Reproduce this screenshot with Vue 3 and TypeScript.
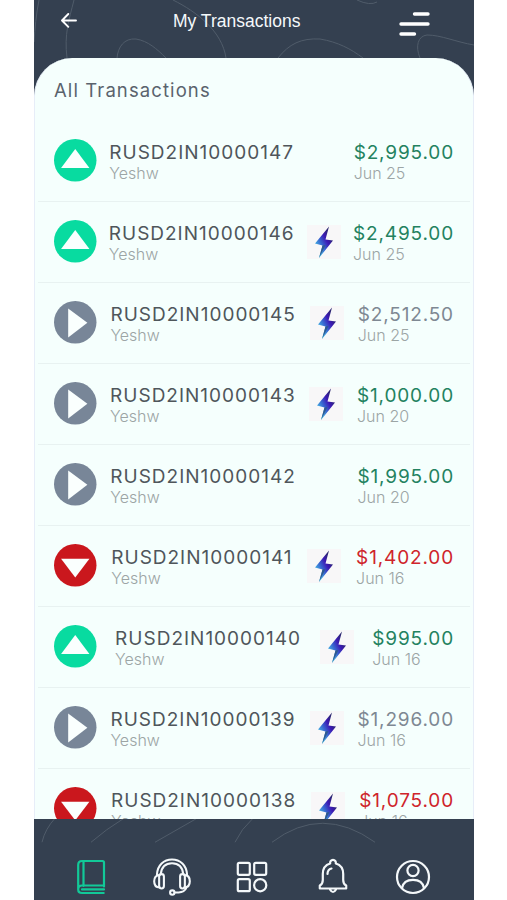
<script setup lang="ts">
type Kind = 'up' | 'down' | 'play'
type Tone = 'green' | 'red' | 'grey'

interface Transaction {
  id: string
  name: string
  kind: Kind
  tone: Tone
  amount: string
  date: string
  instant: boolean
}

const transactions: Transaction[] = [
  { id: 'RUSD2IN10000147', name: 'Yeshw', kind: 'up', tone: 'green', amount: '$2,995.00', date: 'Jun 25', instant: false },
  { id: 'RUSD2IN10000146', name: 'Yeshw', kind: 'up', tone: 'green', amount: '$2,495.00', date: 'Jun 25', instant: true },
  { id: 'RUSD2IN10000145', name: 'Yeshw', kind: 'play', tone: 'grey', amount: '$2,512.50', date: 'Jun 25', instant: true },
  { id: 'RUSD2IN10000143', name: 'Yeshw', kind: 'play', tone: 'green', amount: '$1,000.00', date: 'Jun 20', instant: true },
  { id: 'RUSD2IN10000142', name: 'Yeshw', kind: 'play', tone: 'green', amount: '$1,995.00', date: 'Jun 20', instant: false },
  { id: 'RUSD2IN10000141', name: 'Yeshw', kind: 'down', tone: 'red', amount: '$1,402.00', date: 'Jun 16', instant: true },
  { id: 'RUSD2IN10000140', name: 'Yeshw', kind: 'up', tone: 'green', amount: '$995.00', date: 'Jun 16', instant: true },
  { id: 'RUSD2IN10000139', name: 'Yeshw', kind: 'play', tone: 'grey', amount: '$1,296.00', date: 'Jun 16', instant: true },
  { id: 'RUSD2IN10000138', name: 'Yeshw', kind: 'down', tone: 'red', amount: '$1,075.00', date: 'Jun 16', instant: true },
]

const shapes: Record<Kind, string> = {
  up: 'M21 9.8 35 28.6H7Z',
  down: 'M21 33 7 14.5H35Z',
  play: 'M14 7.5 33 21.5 14 36Z',
}
</script>

<template>
  <div class="phone">
    <header class="header">
      <svg class="lines" viewBox="0 0 440 98" fill="none">
        <path d="M5 0C2 15 1 28 0 42M40 0C35 20 30 34 33 58M139 0C163 12 188 31 192 58M83 58C84 47 90 38 102 39C114 41 123 49 132 58M244 58C255 44 267 38 286 39C304 42 317 49 329 58M323 0Q336 6 343 2M386 58C381 46 384 36 393 35C407 35 422 42 440 45" />
      </svg>
      <button class="back" aria-label="Back">
        <svg width="16" height="15" viewBox="0 0 16 15" fill="none">
          <path d="M15 7.5H1.3M7.3 1 1 7.5l6.3 6.3" stroke="#fff" stroke-width="1.9" stroke-linecap="round" stroke-linejoin="round" />
        </svg>
      </button>
      <h1>My Transactions</h1>
      <button class="menu" aria-label="Menu">
        <svg width="31" height="24" viewBox="0 0 31 24" fill="none">
          <path d="M15.5 2H29M2 12H29M2 22H15.5" stroke="#fff" stroke-width="3.4" stroke-linecap="round" />
        </svg>
      </button>
    </header>

    <main class="sheet">
      <h2>All Transactions</h2>
      <ul>
        <li v-for="t in transactions" :key="t.id">
          <svg class="badge" :class="t.kind" viewBox="0 0 42 42">
            <circle cx="21" cy="21" r="21" />
            <path :d="shapes[t.kind]" fill="#fafffe" />
          </svg>
          <div class="text">
            <span class="main">{{ t.id }}</span>
            <span class="sub">{{ t.name }}</span>
          </div>
          <div class="instant" :class="{ shown: t.instant }">
            <svg v-if="t.instant" width="34" height="34" viewBox="0 0 34 34">
              <defs>
                <linearGradient :id="'bolt-' + t.id" x1="8" y1="22" x2="25" y2="13" gradientUnits="userSpaceOnUse">
                  <stop offset="0" stop-color="#48c4e8" />
                  <stop offset=".4" stop-color="#3862cf" />
                  <stop offset=".7" stop-color="#3c18b4" />
                  <stop offset="1" stop-color="#2b2670" />
                </linearGradient>
              </defs>
              <path d="M22 1.5 8 18.5 15.500 20.500 12 33 26 15.500 18.500 14.500Z" :fill="`url(#bolt-${t.id})`" />
              <path d="M15.500 20.500 18.500 20 12 33Z" fill="#2f5a8f" />
            </svg>
          </div>
          <div class="text">
            <span class="main amount" :class="t.tone">{{ t.amount }}</span>
            <span class="sub">{{ t.date }}</span>
          </div>
        </li>
      </ul>
    </main>

    <nav class="tabs">
      <svg class="lines" viewBox="0 0 440 81" fill="none">
        <path d="M21 0Q11 11 8 24M90 0Q72 11 57 24M163 0L121 24M219 0Q207 11 201 24M238 24Q288-14 341 24" transform="translate(0 -1)" />
      </svg>
      <a class="active" aria-label="Transactions">
        <svg width="40" height="40" viewBox="0 0 40 40">
          <path d="M33 29.500V5.500Q33 4 31.500 4H11Q7.200 4 7.200 8V32.500Q7.200 36 11 36H32.700M12.500 4V29M33 28.500H11Q7.200 28.500 7.200 32.500M11 32.400H33" />
        </svg>
      </a>
      <a aria-label="Support">
        <svg width="40" height="40" viewBox="-1 -1 42 41">
          <path d="M4.200 17C4.700 7 11.500 1.200 20 1.200S35.300 7 35.800 17M8.200 16.500C9 8.500 13.500 5 20 5s11 3.500 11.800 11.500" />
          <path d="M7 17.500C3 17.500 1.300 20.500 1.300 24S3 30.500 7 30.500M33 17.500C37 17.500 38.700 20.500 38.700 24S37 30.500 33 30.500" />
          <rect x="6.500" y="16.500" width="5" height="15" rx="2.500" />
          <rect x="28.500" y="16.500" width="5" height="15" rx="2.500" />
          <path d="M35 31Q33 35.700 27 35.700H22.800" />
          <circle cx="20.300" cy="35.800" r="2.300" />
        </svg>
      </a>
      <a aria-label="Services">
        <svg width="40" height="40" viewBox="0 0 40 40">
          <rect x="5.800" y="5.800" width="12" height="12" rx="1.500" />
          <rect x="22.200" y="5.800" width="12" height="12" rx="1.500" />
          <rect x="5.800" y="22.200" width="12" height="12" rx="1.500" />
          <circle cx="28.200" cy="28.200" r="6.100" />
        </svg>
      </a>
      <a aria-label="Notifications">
        <svg width="40" height="40" viewBox="0 0 40 40">
          <path d="M17.200 6.500A2.900 2.900 0 1 1 22.800 6.500C28 8 30.200 12 30.200 17V23Q30.200 27 33.200 28.500V31.500H6.800V28.500Q9.800 27 9.800 23V17C9.800 12 12 8 17.200 6.500ZM17 32.500Q20 37.500 23 32.500M14.500 17Q14.500 12.500 18.500 11.500" />
        </svg>
      </a>
      <a aria-label="Profile">
        <svg width="40" height="40" viewBox="0 0 40 40">
          <circle cx="20" cy="20" r="16" />
          <circle cx="20" cy="13.500" r="5.600" />
          <path d="M9 31Q10.500 22.800 20 22.800T31 31" />
        </svg>
      </a>
    </nav>
  </div>
</template>

<style>
body {
  background: #fff;
}
</style>

<style scoped>
.phone {
  width: 440px;
  height: 900px;
  margin-left: 34px;
  display: flex;
  flex-direction: column;
  overflow: hidden;
  background: #f5fffd;
  font-family: Inter, sans-serif;
}

.header {
  position: relative;
  box-sizing: border-box;
  flex: none;
  height: 98px;
  margin-bottom: -40px;
  padding: 0 44px 0 27px;
  display: flex;
  align-items: flex-start;
  background: #344050;
}

.lines {
  position: absolute;
  inset: 0;
  width: 100%;
  height: 100%;
  stroke: #505c6a;
  stroke-width: 1;
}

button {
  position: relative;
  padding: 0;
  border: 0;
  background: none;
  display: flex;
}

.back {
  margin-top: 13px;
}

.menu {
  margin: 12px 0 0 auto;
}

h1 {
  position: relative;
  margin: 10px 0 0 96px;
  font: 400 17.5px/22px 'Liberation Sans', sans-serif;
  color: #f5f9fb;
}

.sheet {
  position: relative;
  box-sizing: border-box;
  flex: none;
  height: 760.5px;
  overflow: hidden;
  border-radius: 38px 38px 0 0;
  border-right: 1px solid #e7edf8;
  border-left: 1px solid #e7edf8;
  background: #f5fffd;
}

h2 {
  margin: 0;
  padding: 20px 0 18.5px 19px;
  font-size: 18.5px;
  line-height: 24px;
  font-weight: 400;
  letter-spacing: 1.1px;
  color: #5a636d;
}

ul {
  margin: 0;
  padding: 0 3px;
  list-style: none;
}

li {
  box-sizing: border-box;
  height: 81px;
  padding: 0 16px;
  display: flex;
  justify-content: space-between;
  align-items: center;
  border-bottom: 1px solid #e8f2f1;
}

.badge {
  width: 42.5px;
  height: 42.5px;
}

.up {
  fill: #08dba0;
}

.down {
  fill: #ca171d;
}

.play {
  fill: #788698;
}

.text {
  padding-top: 3px;
  display: flex;
  flex-direction: column;
}

.main {
  font-size: 19px;
  line-height: 21px;
  letter-spacing: 1px;
  color: #4f565b;
}

.amount {
  letter-spacing: 0.85px;
}

.sub {
  font-size: 16px;
  line-height: 20px;
  font-weight: 300;
  color: #9ca5a5;
}

.green {
  color: #238260;
}

.red {
  color: #cf252b;
}

.grey {
  color: #7e8893;
}

.instant {
  width: 34px;
  height: 34px;
  display: flex;
}

.shown {
  background: #f8f7f8;
}

.tabs {
  position: relative;
  box-sizing: border-box;
  flex: none;
  height: 81.5px;
  padding: 38px 41px 0 37px;
  display: flex;
  justify-content: space-between;
  background: #344050;
}

.tabs a {
  position: relative;
  display: flex;
  height: 40px;
  fill: none;
  stroke: #f4f8fa;
  stroke-width: 2.2;
  stroke-linecap: round;
  stroke-linejoin: round;
}

.tabs .active {
  stroke: #12c998;
}
</style>
